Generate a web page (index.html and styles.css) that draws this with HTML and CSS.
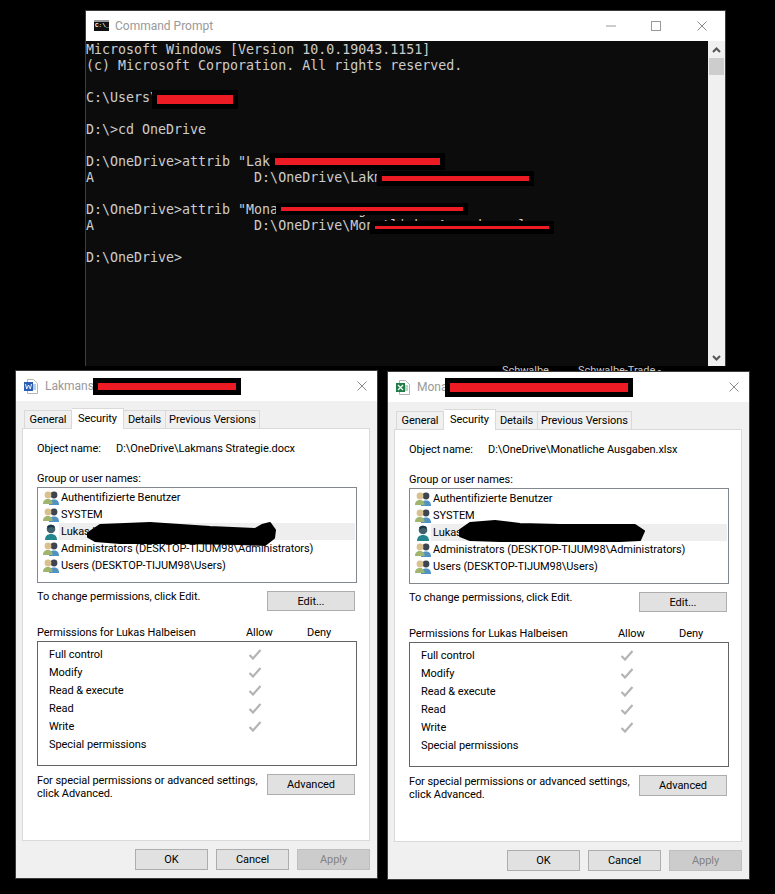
FILE: index.html
```html
<!DOCTYPE html>
<html lang="en">
<head>
<meta charset="utf-8">
<title>Command Prompt and file properties</title>
<link rel="stylesheet" href="styles.css">
</head>
<body>
<svg class="sprite" aria-hidden="true">
  <symbol id="group" viewBox="0 0 16 16">
    <circle cx="11" cy="5" r="3.4" fill="#3d4650"/>
    <path d="M6 15c0-4 2-5.500 5-5.500s5 1.500 5 5.500z" fill="#4f92c4"/>
    <circle cx="5" cy="5" r="3.400" fill="#d8c18f"/>
    <path d="M0 14c0-3.500 2-5 4.800-5s4.800 1.500 4.800 5z" fill="#9fb56f"/>
  </symbol>
  <symbol id="user" viewBox="0 0 16 16">
    <circle cx="8" cy="5" r="4.300" fill="#40606c"/>
    <path d="M4 2.500c2-2.500 7-2.500 8 .5l-1 1c-2-1.500-4-1-6 .5z" fill="#1c3a4a"/>
    <path d="M2 16c0-4 2.500-6 6-6s6 2 6 6z" fill="#23868f"/>
  </symbol>
  <symbol id="check" viewBox="0 0 14 11">
    <path d="M1.500 6l3.500 3.500 7.500-8.500" fill="none" stroke="#b4b4b4" stroke-width="2.200"/>
  </symbol>
  <symbol id="close" viewBox="0 0 10 10">
    <path d="M.5.500l9 9M9.500.500l-9 9" fill="none" stroke="#8c8c8c" stroke-width="1"/>
  </symbol>
</svg>

<main class="desktop">
  <div class="stray stray-a">Schwalbe</div>
  <div class="stray stray-b">Schwalbe-Trade -</div>

  <section class="cmd">
    <header class="cmd-title">
      <span class="cmd-icon"><span class="cmd-icon-text">C:\_</span></span>
      <span class="cmd-name">Command Prompt</span>
      <span class="cmd-controls">
        <svg class="ctl" viewBox="0 0 10 10"><path d="M0 5h10" stroke="#9a9a9a" fill="none"/></svg>
        <svg class="ctl" viewBox="0 0 10 10"><rect x=".5" y=".5" width="9" height="9" stroke="#9a9a9a" fill="none"/></svg>
        <svg class="ctl"><use href="#close"/></svg>
      </span>
    </header>
    <div class="cmd-body">
      <div class="console">
<pre class="console-text">Microsoft Windows [Version 10.0.19043.1151]
(c) Microsoft Corporation. All rights reserved.

C:\Users\

D:\&gt;cd OneDrive

D:\OneDrive&gt;attrib "Lakmans Strategie.docx"
A                    D:\OneDrive\Lakmans Strategie.docx

D:\OneDrive&gt;attrib "Monatliche Ausgaben.xlsx"
A                    D:\OneDrive\Monatliche Ausgaben.xlsx

D:\OneDrive&gt;</pre>
        <div class="redact c1"><div class="red"></div></div>
        <div class="redact c2"><div class="red"></div></div>
        <div class="redact c3"><div class="red"></div></div>
        <div class="redact c4"><div class="red"></div></div>
        <div class="redact c5"><div class="red"></div></div>
      </div>
      <div class="scrollbar">
        <svg class="chev" viewBox="0 0 9 6"><path d="M1 5l3.500-3.500L8 5" fill="none" stroke="#555" stroke-width="2"/></svg>
        <div class="thumb"></div>
        <svg class="chev chev-end" viewBox="0 0 9 6"><path d="M1 1l3.500 3.500L8 1" fill="none" stroke="#555" stroke-width="2"/></svg>
      </div>
    </div>
  </section>

  <section class="dialog dialog-left">
    <header class="dlg-title">
      <svg class="doc" viewBox="0 0 14 15">
        <path d="M3.500.500h6l4 4v10h-10z" fill="#fff" stroke="#b5b5b5"/>
        <path d="M9 6h3M9 8h3M9 10h3" stroke="#6f9bd6"/>
        <rect y="3" width="9" height="9" fill="#2b5fb5"/>
        <path d="M1.500 5l1.200 5 1.800-4 1.800 4 1.200-5" fill="none" stroke="#fff" stroke-width=".9"/>
      </svg>
      <span class="dlg-name">Lakmans Strategie.docx Properties</span>
      <svg class="dlg-close"><use href="#close"/></svg>
    </header>
    <div class="tabs">
      <div class="tab tab-general">General</div>
      <div class="tab tab-security">Security</div>
      <div class="tab tab-details">Details</div>
      <div class="tab tab-previous">Previous Versions</div>
    </div>
    <div class="panel">
      <div class="object-row"><span class="object-label">Object name:</span><span>D:\OneDrive\Lakmans Strategie.docx</span></div>
      <div class="group-label">Group or user names:</div>
      <ul class="names">
        <li class="name"><svg class="person"><use href="#group"/></svg><span class="name-text">Authentifizierte Benutzer</span></li>
        <li class="name"><svg class="person"><use href="#group"/></svg><span class="name-text">SYSTEM</span></li>
        <li class="name"><svg class="person"><use href="#user"/></svg><span class="name-text name-selected">Lukas Halbeisen</span></li>
        <li class="name"><svg class="person"><use href="#group"/></svg><span class="name-text">Administrators (DESKTOP-TIJUM98\Administrators)</span></li>
        <li class="name"><svg class="person"><use href="#group"/></svg><span class="name-text">Users (DESKTOP-TIJUM98\Users)</span></li>
      </ul>
      <div class="action-row edit-row"><span class="action-text">To change permissions, click Edit.</span><button class="btn btn-side btn-edit">Edit...</button></div>
      <div class="perm-head"><span class="perm-for">Permissions for Lukas Halbeisen</span><span class="perm-allow">Allow</span><span>Deny</span></div>
      <ul class="perms">
        <li class="perm"><span class="perm-name">Full control</span><svg class="check"><use href="#check"/></svg></li>
        <li class="perm"><span class="perm-name">Modify</span><svg class="check"><use href="#check"/></svg></li>
        <li class="perm"><span class="perm-name">Read &amp; execute</span><svg class="check"><use href="#check"/></svg></li>
        <li class="perm"><span class="perm-name">Read</span><svg class="check"><use href="#check"/></svg></li>
        <li class="perm"><span class="perm-name">Write</span><svg class="check"><use href="#check"/></svg></li>
        <li class="perm"><span class="perm-name">Special permissions</span></li>
      </ul>
      <div class="action-row adv-row"><span class="action-text adv-text">For special permissions or advanced settings,<br>click Advanced.</span><button class="btn btn-side">Advanced</button></div>
    </div>
    <footer class="dlg-foot">
      <button class="btn btn-foot">OK</button>
      <button class="btn btn-foot">Cancel</button>
      <button class="btn btn-foot btn-off">Apply</button>
    </footer>
    <div class="redact d-left"><div class="red"></div></div>
    <svg class="scribble scribble-left" viewBox="0 0 192 26"><polygon points="2,12 14,4 64,2 124,6 169,8 176,4 184,2 189,9 188,17 179,24 154,23 94,22 34,22 9,20 2,16"/></svg>
  </section>

  <section class="dialog dialog-right">
    <header class="dlg-title">
      <svg class="doc" viewBox="0 0 14 15">
        <path d="M3.500.500h6l4 4v10h-10z" fill="#fff" stroke="#b5b5b5"/>
        <path d="M9 6h3M9 8h3M9 10h3" stroke="#6fb38a"/>
        <rect y="3" width="9" height="9" fill="#1e7e45"/>
        <path d="M2 5l5 5M7 5l-5 5" fill="none" stroke="#fff" stroke-width="1.200"/>
      </svg>
      <span class="dlg-name">Monatliche Ausgaben.xlsx Properties</span>
      <svg class="dlg-close"><use href="#close"/></svg>
    </header>
    <div class="tabs">
      <div class="tab tab-general">General</div>
      <div class="tab tab-security">Security</div>
      <div class="tab tab-details">Details</div>
      <div class="tab tab-previous">Previous Versions</div>
    </div>
    <div class="panel">
      <div class="object-row"><span class="object-label">Object name:</span><span>D:\OneDrive\Monatliche Ausgaben.xlsx</span></div>
      <div class="group-label">Group or user names:</div>
      <ul class="names">
        <li class="name"><svg class="person"><use href="#group"/></svg><span class="name-text">Authentifizierte Benutzer</span></li>
        <li class="name"><svg class="person"><use href="#group"/></svg><span class="name-text">SYSTEM</span></li>
        <li class="name"><svg class="person"><use href="#user"/></svg><span class="name-text name-selected">Lukas Halbeisen</span></li>
        <li class="name"><svg class="person"><use href="#group"/></svg><span class="name-text">Administrators (DESKTOP-TIJUM98\Administrators)</span></li>
        <li class="name"><svg class="person"><use href="#group"/></svg><span class="name-text">Users (DESKTOP-TIJUM98\Users)</span></li>
      </ul>
      <div class="action-row edit-row"><span class="action-text">To change permissions, click Edit.</span><button class="btn btn-side btn-edit">Edit...</button></div>
      <div class="perm-head"><span class="perm-for">Permissions for Lukas Halbeisen</span><span class="perm-allow">Allow</span><span>Deny</span></div>
      <ul class="perms">
        <li class="perm"><span class="perm-name">Full control</span><svg class="check"><use href="#check"/></svg></li>
        <li class="perm"><span class="perm-name">Modify</span><svg class="check"><use href="#check"/></svg></li>
        <li class="perm"><span class="perm-name">Read &amp; execute</span><svg class="check"><use href="#check"/></svg></li>
        <li class="perm"><span class="perm-name">Read</span><svg class="check"><use href="#check"/></svg></li>
        <li class="perm"><span class="perm-name">Write</span><svg class="check"><use href="#check"/></svg></li>
        <li class="perm"><span class="perm-name">Special permissions</span></li>
      </ul>
      <div class="action-row adv-row"><span class="action-text adv-text">For special permissions or advanced settings,<br>click Advanced.</span><button class="btn btn-side">Advanced</button></div>
    </div>
    <footer class="dlg-foot">
      <button class="btn btn-foot">OK</button>
      <button class="btn btn-foot">Cancel</button>
      <button class="btn btn-foot btn-off">Apply</button>
    </footer>
    <div class="redact d-right"><div class="red"></div></div>
    <svg class="scribble scribble-right" viewBox="0 0 192 26"><polygon points="2,11 12,4 37,2 62,5 102,6 177,6 186,12 182,21 162,22 102,22 42,22 12,21 2,17"/></svg>
  </section>
</main>
</body>
</html>
```
FILE: styles.css
```css
* { box-sizing: border-box; }
html, body { margin: 0; padding: 0; background: #000; }
ul { list-style: none; margin: 0; padding: 0; }
.sprite { display: none; }

.desktop {
  position: relative;
  width: 775px;
  height: 894px;
  overflow: hidden;
  background: #000;
  font-family: Roboto, "Noto Sans", sans-serif;
  font-size: 11px;
  letter-spacing: -0.06px;
  line-height: 17px;
  color: #000;
}

.stray {
  position: absolute;
  top: 362px;
  color: #c8c8c8;
  white-space: nowrap;
}
.stray-a { left: 502px; }
.stray-b { left: 578px; }

/* Command Prompt window */
.cmd {
  position: absolute;
  left: 85px;
  top: 10px;
  width: 641px;
  height: 356px;
  display: flex;
  flex-direction: column;
  border: 1px solid #3c3c3c;
  border-bottom: 0;
  background: #fff;
  letter-spacing: 0;
}
.cmd-title {
  display: flex;
  align-items: center;
  height: 30px;
  flex: none;
  padding-left: 8px;
  background: #fff;
}
.cmd-icon {
  display: block;
  width: 15px;
  height: 11px;
  margin-top: -2px;
  background: #111;
  border-top: 2px solid #9a9a9a;
  overflow: hidden;
}
.cmd-icon-text {
  display: block;
  font: bold 6px/8px "Liberation Mono", monospace;
  color: #fff;
  padding-left: 1px;
}
.cmd-name {
  margin-left: 6px;
  font-size: 12px;
  color: #999;
}
.cmd-controls {
  display: flex;
  margin-left: auto;
  gap: 35px;
  padding-right: 18px;
}
.ctl { width: 10px; height: 10px; display: block; }
.cmd-controls .ctl:nth-child(2) { margin-right: 1px; }

.cmd-body { display: flex; flex: 1; min-height: 0; }
.console {
  position: relative;
  flex: 1;
  background: #0c0c0c;
  overflow: hidden;
}
.console-text {
  margin: 0;
  padding-top: 1px;
  font-family: "DejaVu Sans Mono", monospace;
  font-size: 13.3px;
  line-height: 16px;
  color: #ccc;
}
.scrollbar {
  position: relative;
  width: 17px;
  flex: none;
  display: flex;
  flex-direction: column;
  align-items: center;
  background: #f0f0f0;
}
.chev { width: 9px; height: 6px; margin-top: 6px; display: block; flex: none; }
.chev-end { margin-top: auto; margin-bottom: 5px; }
.thumb { width: 15px; height: 17px; margin-top: 5px; background: #cdcdcd; }

/* Redaction marks */
.redact {
  position: absolute;
  background: #000;
  padding: 5px;
}
.red { background: #ed1c24; }
.c1 { left: 66px; top: 49px; }
.c1 .red { width: 76px; height: 9px; }
.c2 { left: 184px; top: 112px; }
.c2 .red { width: 165px; height: 7px; }
.c3 { left: 291px; top: 130px; }
.c3 .red { width: 147px; height: 5px; }
.c4 { left: 190px; top: 162px; padding: 4px 5px; }
.c4 .red { width: 182px; height: 4px; }
.c5 { left: 284px; top: 180px; }
.c5 .red { width: 174px; height: 3px; }
.d-left { left: 77px; top: 7px; }
.d-left .red { width: 138px; height: 7px; }
.d-right { left: 57px; top: 6px; }
.d-right .red { width: 178px; height: 9px; }

.scribble {
  position: absolute;
  width: 192px;
  height: 26px;
  fill: #000;
  stroke: #000;
  stroke-width: 2;
  stroke-linejoin: round;
}
.scribble-left { left: 70px; top: 150px; }
.scribble-right { left: 70px; top: 147px; }

/* Properties dialogs */
.dialog {
  position: absolute;
  width: 363px;
  height: 509px;
  display: flex;
  flex-direction: column;
  background: #f0f0f0;
  border: 1px solid #3c3c3c;
}
.dialog-left { left: 15px; top: 370px; }
.dialog-right { left: 387px; top: 371px; }

.dlg-title {
  display: flex;
  align-items: center;
  flex: none;
  height: 30px;
  padding: 0 10px 0 8px;
  background: #fff;
}
.doc { width: 14px; height: 15px; flex: none; }
.dlg-name {
  margin-left: 7px;
  font-size: 12px;
  letter-spacing: 0;
  color: #999;
  white-space: nowrap;
}
.dlg-close { width: 10px; height: 10px; margin-left: auto; flex: none; }

.tabs {
  display: flex;
  align-items: flex-end;
  flex: none;
  height: 21px;
  margin: 6px 0 0 8px;
}
.tab {
  height: 18px;
  display: flex;
  align-items: center;
  justify-content: center;
  border: 1px solid #d9d9d9;
  border-bottom: 0;
  border-left: 0;
  background: #f0f0f0;
  white-space: nowrap;
}
.tab-general { width: 48px; border-left: 1px solid #d9d9d9; }
.tab-security {
  position: relative;
  width: 52px;
  height: 21px;
  margin-bottom: -1px;
  padding-bottom: 2px;
  background: #fff;
}
.tab-details { width: 42px; }
.tab-previous { width: 94px; }

.panel {
  flex: 1;
  min-height: 0;
  margin: 0 7px 0 6px;
  padding: 11px 11px 0 14px;
  background: #fff;
  border: 1px solid #d9d9d9;
}
.object-row { display: flex; height: 16px; white-space: nowrap; }
.object-label { width: 79px; flex: none; }
.group-label { margin-top: 14px; height: 16px; }

.names {
  width: 320px;
  height: 96px;
  margin-top: 1px;
  padding-top: 1px;
  border: 1px solid #828790;
}
.name {
  display: flex;
  align-items: center;
  height: 17px;
  padding-left: 5px;
  margin-right: 1px;
}
.person { width: 16px; height: 16px; flex: none; }
.name-text { flex: 1; padding-left: 2px; white-space: nowrap; }
.name-selected { background: #eee; }

.action-row {
  display: flex;
  justify-content: space-between;
  align-items: flex-start;
  width: 318px;
}
.edit-row { margin-top: 8px; }
.edit-row .action-text { margin-top: -3px; }
.adv-row { margin-top: 8px; }
.adv-text { line-height: 13px; white-space: nowrap; }

.btn {
  margin: 0;
  padding: 0;
  font: inherit;
  letter-spacing: inherit;
  color: #000;
  background: #e1e1e1;
  border: 1px solid #adadad;
  border-radius: 0;
}
.btn-side { width: 88px; height: 21px; flex: none; }
.btn-edit { height: 20px; }
.btn-foot { width: 73px; height: 21px; }
.btn-off { background: #ccc; border-color: #bfbfbf; color: #838383; }

.perm-head { display: flex; height: 16px; margin-top: 13px; white-space: nowrap; }
.perm-for { width: 209px; flex: none; }
.perm-allow { width: 61px; flex: none; }

.perms {
  width: 320px;
  height: 125px;
  margin-top: 1px;
  padding: 3px 0 0 11px;
  border: 1px solid #646464;
}
.perm { display: flex; align-items: center; height: 18px; }
.perm-name { width: 199px; flex: none; }
.check { width: 14px; height: 11px; flex: none; }

.dlg-foot {
  display: flex;
  justify-content: flex-end;
  gap: 8px;
  flex: none;
  height: 37px;
  padding: 8px 7px 0 0;
}
```
